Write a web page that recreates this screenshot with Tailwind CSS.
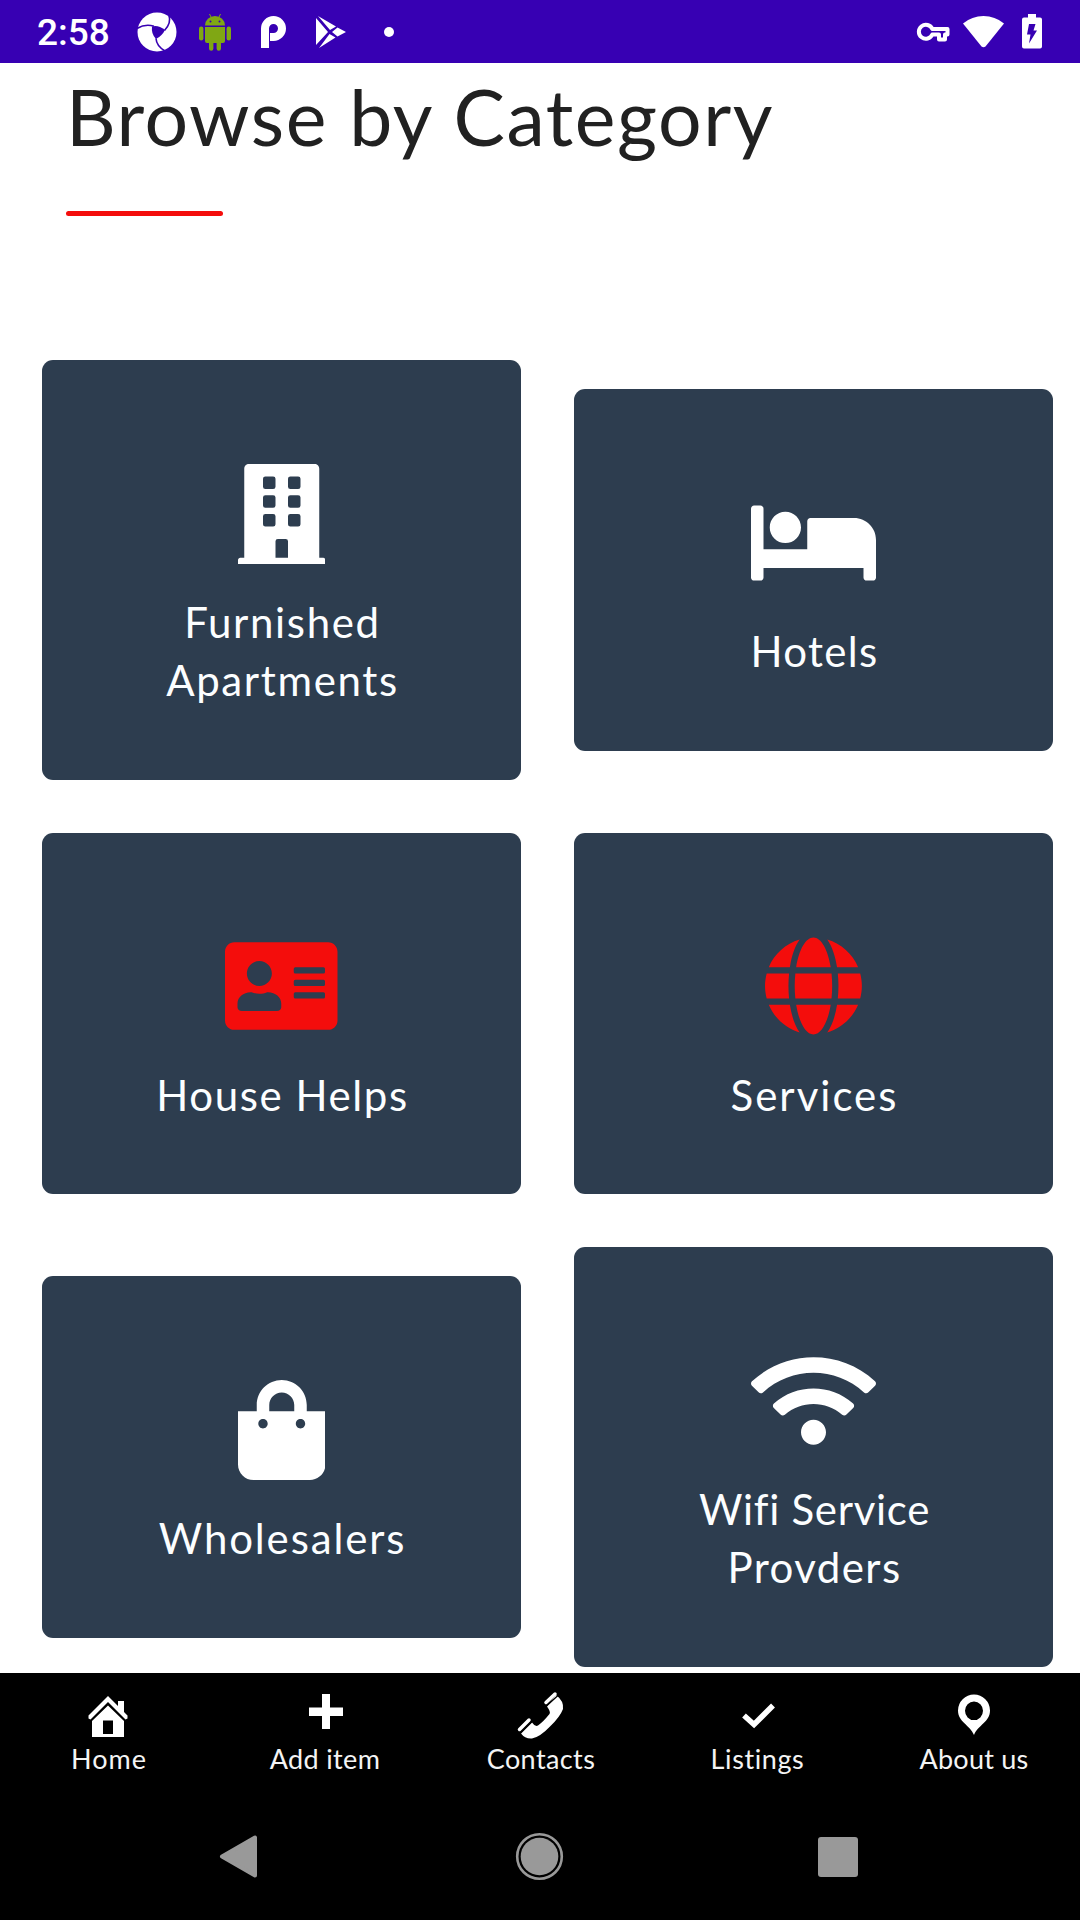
<!DOCTYPE html>
<html lang="en">
<head>
<meta charset="utf-8">
<title>Browse by Category</title>
<script src="https://cdn.jsdelivr.net/npm/@tailwindcss/browser@4"></script>
</head>
<body class="flex h-[1920px] w-[1080px] flex-col overflow-hidden bg-white font-['Lato',sans-serif]">

<!-- Status bar -->
<header class="flex h-[63px] shrink-0 items-center bg-[#3700b3] pl-[37px] pr-[38px] text-white">
  <span class="w-[100px] pt-[2px] font-['Roboto',sans-serif] text-[37px] leading-[64px] font-medium">2:58</span>
  <svg class="size-10" viewBox="0 0 40 40">
    <circle cx="20" cy="20" r="19.5" fill="#fff"/>
    <path d="M15 14.5Q21 12.500 28 18Q25 24 19 27Q14 22 15 14.5Z" fill="#3700b3"/>
    <g fill="none" stroke="#3700b3" stroke-width="1.6"><path d="M0 16.500Q8 11.500 17 14.200"/><path d="M32 3.500Q34.500 11 27.500 18.500"/><path d="M19 26.500Q19.500 34 28 39"/></g>
  </svg>
  <svg class="ml-[22px] h-[38px] w-8" viewBox="0 0 32 38" fill="#80a714">
    <path d="M6 12.500A10 9.500 0 0 1 26 12.500Z"/><path d="M10.500 1l2 4M21.500 1l-2 4" stroke="#80a714" stroke-width="1"/>
    <circle cx="11.500" cy="8.500" r="1" fill="#3700b3"/><circle cx="20.500" cy="8.500" r="1" fill="#3700b3"/>
    <path d="M6 14H26V28Q26 30 24 30H22V35.500a2.200 2.200 0 0 1-4.400 0V30H14.400V35.500a2.200 2.200 0 0 1-4.400 0V30H8Q6 30 6 28Z"/>
    <rect y="13.500" width="4.400" height="14" rx="2.200"/><rect x="27.600" y="13.500" width="4.400" height="14" rx="2.200"/>
  </svg>
  <svg class="ml-[28px] h-[34px] w-7" viewBox="0 0 28 34" fill="none" stroke="#fff" stroke-width="8">
    <path d="M6 33V13.500A8.500 8.500 0 1 1 14.500 22H11"/>
  </svg>
  <svg class="ml-[28px] h-[34px] w-8" viewBox="0 0 32 34" fill="#fff">
    <path d="M1 3V30L13 17ZM3 1L21 11.500L15 15ZM22.500 12.500L31 17L22.500 21.500L17 17ZM14.500 19L20.500 22.500L4 33Z"/>
  </svg>
  <span class="ml-[37px] size-[10px] rounded-full bg-white"></span>
  <svg class="ml-auto h-5 w-[34px]" viewBox="0 0 34 20" fill="none" stroke="#fff" stroke-width="4">
    <path d="M16.300 7H31.500V12.500H29V17.500H23V12.500H16.300A7 7 0 1 1 16.300 7Z" stroke-linejoin="round"/>
  </svg>
  <svg class="ml-[13px] h-8 w-[41px]" viewBox="0 0 41 32" fill="#fff"><path d="M0 7.500Q9 0 20.500 0T41 7.500L22.500 30.500Q20.500 32 18.500 30.500Z"/></svg>
  <svg class="ml-[18px] h-[35px] w-5" viewBox="0 0 20 35"><path d="M6 0H14V3.500H18Q20 3.500 20 5.500V32.500Q20 34.500 18 34.500H2Q0 34.500 0 32.500V5.500Q0 3.500 2 3.500H6Z" fill="#fff"/><path d="M7 10H13.500L11.500 16.500H15L7 29.500L8.500 20.500H5Z" fill="#3700b3"/></svg>
</header>

<!-- Page content -->
<main class="h-[1610px] shrink-0 overflow-hidden pt-[8px]">
  <div class="pl-[66px]">
    <h1 class="text-[77px] leading-[90px] tracking-[1.550px] text-[#212121]">Browse by Category</h1>
    <div class="mt-[50px] h-[5px] w-[157px] rounded-[3px] bg-[#f40d0c]"></div>
  </div>

  <section class="mt-[144px] ml-[42px] grid w-[1011px] grid-cols-2 items-center gap-x-[53px] gap-y-[52.6px] text-center text-[42px] leading-[58.2px] text-[#fcfeff]">
    <a class="flex flex-col items-center rounded-[11px] bg-[#2d3d4f] px-[100px] pt-[103.6px] pb-[70.600px]">
      <svg class="h-[100px] w-[87.500px]" viewBox="0 0 448 512" fill="#fff" fill-rule="evenodd"><path d="M436 480h-20V24c0-13.255-10.745-24-24-24H56C42.745 0 32 10.745 32 24v456H12c-6.627 0-12 5.373-12 12v20h448v-20c0-6.627-5.373-12-12-12zM140 64h40q12 0 12 12v40q0 12-12 12h-40q-12 0-12-12V76q0-12 12-12zM268 64h40q12 0 12 12v40q0 12-12 12h-40q-12 0-12-12V76q0-12 12-12zM140 160h40q12 0 12 12v40q0 12-12 12h-40q-12 0-12-12v-40q0-12 12-12zM268 160h40q12 0 12 12v40q0 12-12 12h-40q-12 0-12-12v-40q0-12 12-12zM140 256h40q12 0 12 12v40q0 12-12 12h-40q-12 0-12-12v-40q0-12 12-12zM268 256h40q12 0 12 12v40q0 12-12 12h-40q-12 0-12-12v-40q0-12 12-12zM204 384h40q12 0 12 12v84h-64v-84q0-12 12-12z"/></svg>
      <span class="mt-[29.400px] pl-[2px] tracking-[1.640px]">Furnished Apartments</span>
    </a>
    <a class="flex flex-col items-center rounded-[11px] bg-[#2d3d4f] pt-[103.6px] pb-[70.600px]">
      <svg class="h-[100px] w-[125px]" viewBox="0 0 640 512" fill="#fff"><path d="M176 256c44.110 0 80-35.890 80-80s-35.890-80-80-80-80 35.890-80 80 35.890 80 80 80zm352-128H304c-8.840 0-16 7.160-16 16v144H64V80c0-8.840-7.160-16-16-16H16C7.160 64 0 71.160 0 80v352c0 8.840 7.160 16 16 16h32c8.840 0 16-7.160 16-16v-48h512v48c0 8.840 7.160 16 16 16h32c8.840 0 16-7.160 16-16V240c0-61.860-50.140-112-112-112z"/></svg>
      <span class="mt-[29.400px] pl-[2px] tracking-[1.340px]">Hotels</span>
    </a>

    <a class="flex flex-col items-center rounded-[11px] bg-[#2d3d4f] pt-[103.6px] pb-[70.600px]">
      <svg class="h-[100px] w-[112.500px]" viewBox="0 0 576 512" fill="#f40d0c" fill-rule="evenodd"><path d="M528 32H48C21.500 32 0 53.500 0 80v352c0 26.500 21.500 48 48 48h480c26.500 0 48-21.500 48-48V80c0-26.500-21.500-48-48-48zM176 128c35.300 0 64 28.700 64 64s-28.700 64-64 64-64-28.700-64-64 28.700-64 64-64zm112 236.800c0 10.600-10 19.200-22.400 19.200H86.400C74 384 64 375.400 64 364.800v-19.200c0-31.800 30.100-57.600 67.200-57.600h5c12.300 5.100 25.700 8 39.800 8s27.600-2.900 39.800-8h5c37.100 0 67.200 25.800 67.200 57.600v19.200zM360 160h144q8 0 8 8v16q0 8-8 8H360q-8 0-8-8v-16q0-8 8-8zM360 224h144q8 0 8 8v16q0 8-8 8H360q-8 0-8-8v-16q0-8 8-8zM360 288h144q8 0 8 8v16q0 8-8 8H360q-8 0-8-8v-16q0-8 8-8z"/></svg>
      <span class="mt-[29.400px] pl-[2px] tracking-[1.600px]">House Helps</span>
    </a>
    <a class="flex flex-col items-center rounded-[11px] bg-[#2d3d4f] pt-[103.6px] pb-[70.600px]">
      <svg class="h-[100px] w-[96.900px]" viewBox="0 0 496 512" fill="#f40d0c"><path d="M336.500 160C322 70.700 287.800 8 248 8s-74 62.700-88.500 152h177zM152 256c0 22.200 1.200 43.500 3.300 64h185.300c2.100-20.500 3.300-41.800 3.300-64s-1.200-43.500-3.300-64H155.300c-2.100 20.500-3.300 41.800-3.300 64zm324.700-96c-28.600-67.900-86.500-120.400-158-141.600 24.400 33.800 41.200 84.700 50 141.600h108zM177.200 18.400C105.800 39.600 47.800 92.100 19.300 160h108c8.700-56.900 25.500-107.800 49.900-141.600zM487.400 192H372.700c2.100 21 3.300 42.500 3.300 64s-1.200 43-3.300 64h114.600c5.500-20.500 8.600-41.800 8.600-64s-3.100-43.500-8.500-64zM120 256c0-21.500 1.200-43 3.300-64H8.600C3.200 212.500 0 233.800 0 256s3.200 43.500 8.600 64h114.600c-2-21-3.200-42.500-3.200-64zm39.500 96c14.500 89.300 48.700 152 88.500 152s74-62.700 88.500-152h-177zm159.300 141.600c71.400-21.200 129.400-73.700 158-141.600h-108c-8.800 56.900-25.600 107.800-50 141.600zM19.300 352c28.600 67.900 86.500 120.400 158 141.600-24.400-33.800-41.200-84.700-50-141.600h-108z"/></svg>
      <span class="mt-[29.400px] pl-[2px] tracking-[2px]">Services</span>
    </a>

    <a class="flex flex-col items-center rounded-[11px] bg-[#2d3d4f] pt-[103.6px] pb-[70.600px]">
      <svg class="h-[100px] w-[87.500px]" viewBox="0 0 448 512" fill="#fff"><path d="M352 160v-32C352 57.420 294.579 0 224 0 153.420 0 96 57.420 96 128v32H0v272c0 44.183 35.817 80 80 80h288c44.183 0 80-35.817 80-80V160h-96zm-192-32c0-35.290 28.710-64 64-64s64 28.710 64 64v32H160v-32zm160 120c-13.255 0-24-10.745-24-24s10.745-24 24-24 24 10.745 24 24-10.745 24-24 24zm-192 0c-13.255 0-24-10.745-24-24s10.745-24 24-24 24 10.745 24 24-10.745 24-24 24z"/></svg>
      <span class="mt-[29.400px] pl-[2px] tracking-[1.850px]">Wholesalers</span>
    </a>
    <a class="flex flex-col items-center rounded-[11px] bg-[#2d3d4f] px-[100px] pt-[103.6px] pb-[70.600px]">
      <svg class="h-[100px] w-[125px]" viewBox="0 0 640 512" fill="#fff"><path d="M634.910 154.880C457.740-8.990 182.190-8.930 5.090 154.880c-6.660 6.160-6.790 16.590-.350 22.980l34.240 33.970c6.140 6.100 16.020 6.230 22.400.380 145.920-133.680 371.300-133.710 517.250 0 6.380 5.850 16.260 5.710 22.400-.380l34.240-33.970c6.430-6.390 6.300-16.820-.360-22.980zM320 352c-35.350 0-64 28.650-64 64s28.650 64 64 64 64-28.650 64-64-28.650-64-64-64zm202.670-83.590c-115.260-101.930-290.210-101.820-405.340 0-6.900 6.100-7.120 16.690-.570 23.150l34.440 33.990c6 5.920 15.660 6.320 22.050.800 83.950-72.570 209.740-72.410 293.490 0 6.390 5.520 16.050 5.130 22.050-.800l34.440-33.990c6.560-6.460 6.330-17.060-.560-23.150z"/></svg>
      <span class="mt-[29.400px] pl-[2px] tracking-[1.450px]"><span class="tracking-[0.700px]">Wifi Service</span> Provders</span>
    </a>
  </section>
</main>

<!-- App tabs -->
<nav class="grid h-[121px] shrink-0 grid-cols-5 bg-black pt-[16px] text-center text-[27px] leading-[32px] text-[#f4f4f4]">
  <a class="flex flex-col items-center">
    <svg class="h-[52px] w-[60px]" viewBox="0 0 60 52" fill="#fff"><path d="M30 7L40 17V12H46V23L49.500 26.500V29.500L47.500 30.500L30 13L12.500 30.500L10.500 29.500V26.500Z"/><path fill-rule="evenodd" d="M30 16.500L46 32V48H14V32ZM25 31.500V45H35V31.500Z"/></svg>
    <span class="mt-[1.500px] pl-[2px] tracking-[1px]">Home</span>
  </a>
  <a class="flex flex-col items-center">
    <svg class="h-[52px] w-[60px]" viewBox="0 0 60 52" fill="#fff"><path d="M28 5H36V18.500H49V27H36V40H28V27H15V18.500H28Z"/></svg>
    <span class="mt-[1.500px] pl-[2px] tracking-[0.360px]">Add item</span>
  </a>
  <a class="flex flex-col items-center">
    <svg class="h-[52px] w-[60px]" viewBox="0 0 60 52" fill="#fff"><path d="M46 6Q54 12 53 20Q50 28 40 37.500Q30 48 22 49.500Q15 50 11 44.500L22 33.500Q25 38 28 36.500Q33 33 39.500 25Q41 23 37 17.500Z"/><path d="M19 31L9.500 40.500M45 5L36 13.500" stroke="#fff" stroke-width="3.500" stroke-linecap="round"/><path d="M22.500 32L10.500 44M48.500 6L36.500 17" stroke="#000" stroke-width="1.200"/></svg>
    <span class="mt-[1.500px] pl-[2px] tracking-[0.400px]">Contacts</span>
  </a>
  <a class="flex flex-col items-center">
    <svg class="ml-[2px] h-[52px] w-[60px]" viewBox="0 0 60 52"><path d="M17 26.500L27 35.500L46 16.500" fill="none" stroke="#fff" stroke-width="5.500"/></svg>
    <span class="mt-[1.500px] pl-[3px] tracking-[0.600px]">Listings</span>
  </a>
  <a class="flex flex-col items-center">
    <svg class="ml-[4px] h-[52px] w-[60px]" viewBox="0 0 60 52" fill="#fff" fill-rule="evenodd"><path d="M30 5.500A16 16 0 0 1 46 21.500C46 33 34 36 30 46C26 36 14 33 14 21.500A16 16 0 0 1 30 5.500ZM30 12.500a9 9.300 0 1 0 0 18.600a9 9.300 0 1 0 0-18.600Z"/></svg>
    <span class="mt-[1.500px] pl-[4px] tracking-[0.240px]">About us</span>
  </a>
</nav>

<!-- System navigation -->
<footer class="flex flex-1 items-start bg-black pt-[37px] pl-[219px]">
  <svg class="h-[50px] w-[40px]" viewBox="0 0 40 50"><path d="M3 25.500L36 6.500V44.500Z" fill="#999" stroke="#999" stroke-width="4" stroke-linejoin="round"/></svg>
  <svg class="ml-[256px] size-[50px]" viewBox="0 0 50 50"><circle cx="24.500" cy="25.500" r="22.300" fill="none" stroke="#999" stroke-width="2.600"/><circle cx="24.500" cy="25.500" r="18.800" fill="#999"/></svg>
  <span class="mt-[6px] ml-[253px] size-10 rounded-[3px] bg-[#999]"></span>
</footer>
</body>
</html>
